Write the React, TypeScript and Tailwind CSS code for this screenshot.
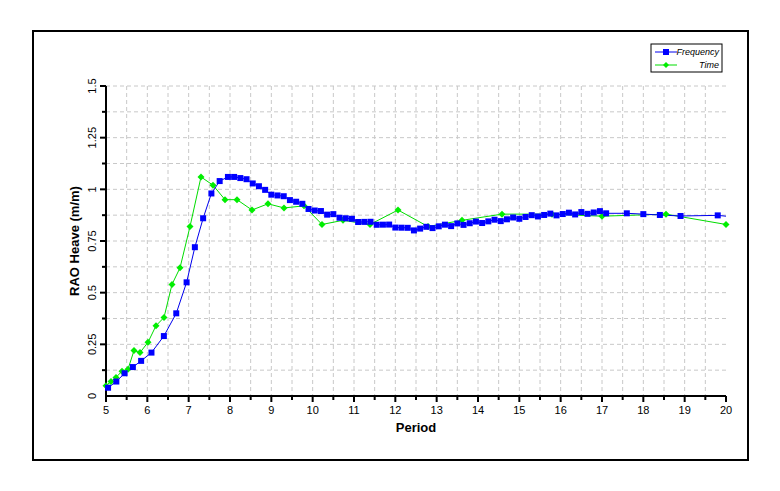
import React from "react";

const X0 = 106, X1 = 726, Y0 = 396, Y1 = 86;
const px = (x: number) => X0 + ((x - 5) / 15) * (X1 - X0);
const py = (v: number) => Y0 - (v / 1.5) * (Y0 - Y1);

const interp = (k: [number, number][], x: number) => {
  for (let i = 0; i < k.length - 1; i++) {
    if (x >= k[i][0] && x <= k[i + 1][0]) {
      const t = (x - k[i][0]) / (k[i + 1][0] - k[i][0]);
      return k[i][1] + t * (k[i + 1][1] - k[i][1]);
    }
  }
  return k[k.length - 1][1];
};

const blueA: [number, number][] = [
  [5.05, 0.04], [5.25, 0.07], [5.45, 0.11], [5.65, 0.14], [5.85, 0.17], [6.1, 0.21], [6.4, 0.29],
  [6.7, 0.4], [6.95, 0.55], [7.15, 0.72], [7.35, 0.86], [7.55, 0.98], [7.75, 1.04], [7.95, 1.06],
];
const tail: [number, number][] = [
  [8.1, 1.065], [8.6, 1.03], [8.9, 0.985], [9.5, 0.95], [10, 0.9], [11, 0.85], [12, 0.82], [12.4, 0.805],
  [13, 0.82], [14, 0.84], [14.5, 0.85], [15.5, 0.875], [17, 0.89], [18, 0.88], [19, 0.87], [20, 0.875],
];
const blue: [number, number][] = [...blueA];
for (let x = 8.1; x <= 17.21; x += 0.15) blue.push([x, interp(tail, x) + (Math.round(x * 7) % 3 - 1) * 0.005]);
[17.6, 18, 18.4, 18.9, 19.8].forEach((x) => blue.push([x, interp(tail, x)]));
const blueLine = [...blue, [20, 0.87] as [number, number]];

const greenPx: [number, number][] = [
  [106, 0.05], [111, 0.07], [116, 0.09], [122, 0.12], [128, 0.13], [134, 0.22], [140, 0.21], [148, 0.26],
  [156, 0.34], [164, 0.38], [172, 0.54], [180, 0.62], [190, 0.82], [201, 1.06], [213, 1.02], [225, 0.95],
  [237, 0.95], [252, 0.9], [268, 0.93], [284, 0.91], [304, 0.92], [322, 0.83], [343, 0.85], [370, 0.83],
  [398, 0.9], [428, 0.82], [462, 0.85], [502, 0.88], [552, 0.88], [602, 0.87], [666, 0.88], [726, 0.83],
];

export default function App() {
  const font = { fontFamily: "'Liberation Sans', Arial, sans-serif" };
  const vgrid: number[] = [];
  for (let x = 5.5; x < 20; x += 0.5) vgrid.push(x);
  const hgrid: number[] = [];
  for (let v = 0.125; v <= 1.5; v += 0.125) hgrid.push(v);
  return (
    <div className="w-[780px] h-[491px] bg-white">
      <svg width="780" height="491" style={font}>
        <rect x="33" y="31" width="715" height="429" fill="none" stroke="#000" strokeWidth="2" />
        {vgrid.map((x) => (
          <line key={"v" + x} x1={px(x)} x2={px(x)} y1={Y1} y2={Y0} stroke="#c8c8c8" strokeDasharray="4 3" />
        ))}
        {hgrid.map((v) => (
          <line key={"h" + v} x1={X0} x2={X1} y1={py(v)} y2={py(v)} stroke="#c8c8c8" strokeDasharray="4 3" />
        ))}
        <line x1={X0} x2={X0} y1={Y1} y2={Y0 + 1} stroke="#000" strokeWidth="2" />
        <line x1={X0 - 1} x2={X1} y1={Y0} y2={Y0} stroke="#000" strokeWidth="2" />
        {hgrid.map((v, i) => (
          <line key={"yt" + v} x1={i % 2 ? X0 - 6 : X0 - 4} x2={X0} y1={py(v)} y2={py(v)} stroke="#000" strokeWidth="2" />
        ))}
        {vgrid.concat([5, 20]).map((x) => (
          <line key={"xt" + x} x1={px(x)} x2={px(x)} y1={Y0} y2={Y0 + (Number.isInteger(x) ? 6 : 4)} stroke="#000" strokeWidth="2" />
        ))}
        {[0, 0.25, 0.5, 0.75, 1, 1.25, 1.5].map((v) => (
          <text key={"yl" + v} x={96} y={py(v)} fontSize="11" textAnchor="middle" transform={`rotate(-90 96 ${py(v)})`}>
            {String(v)}
          </text>
        ))}
        {Array.from({ length: 16 }, (_, i) => 5 + i).map((x) => (
          <text key={"xl" + x} x={px(x)} y={414} fontSize="11" textAnchor="middle">{x}</text>
        ))}
        <text x={416} y={432} fontSize="13" fontWeight="bold" textAnchor="middle">Period</text>
        <text x={79} y={241} fontSize="13" fontWeight="bold" textAnchor="middle" transform="rotate(-90 79 241)">RAO Heave (m/m)</text>
        <polyline fill="none" stroke="#00dd00" strokeWidth="1" points={greenPx.map(([x, v]) => `${x},${py(v)}`).join(" ")} />
        <polyline fill="none" stroke="#0000ee" strokeWidth="1" points={blueLine.map(([x, v]) => `${px(x)},${py(v)}`).join(" ")} />
        {greenPx.map(([x, v], i) => (
          <polygon key={"g" + i} points={`${x},${py(v) - 3.5} ${x + 3.5},${py(v)} ${x},${py(v) + 3.5} ${x - 3.5},${py(v)}`} fill="#00ee00" />
        ))}
        {blue.map(([x, v], i) => (
          <rect key={"b" + i} x={px(x) - 3} y={py(v) - 3} width="6" height="6" fill="#0000ff" />
        ))}
        <rect x="651" y="44" width="71" height="28" fill="#fff" stroke="#000" />
        <line x1="655" x2="677" y1="52" y2="52" stroke="#0000ee" />
        <rect x="663" y="49" width="6" height="6" fill="#0000ff" />
        <text x="719" y="55" fontSize="9" fontStyle="italic" textAnchor="end">Frequency</text>
        <line x1="655" x2="677" y1="65" y2="65" stroke="#00dd00" />
        <polygon points="666,62 669,65 666,68 663,65" fill="#00ee00" />
        <text x="719" y="68" fontSize="9" fontStyle="italic" textAnchor="end">Time</text>
      </svg>
    </div>
  );
}
